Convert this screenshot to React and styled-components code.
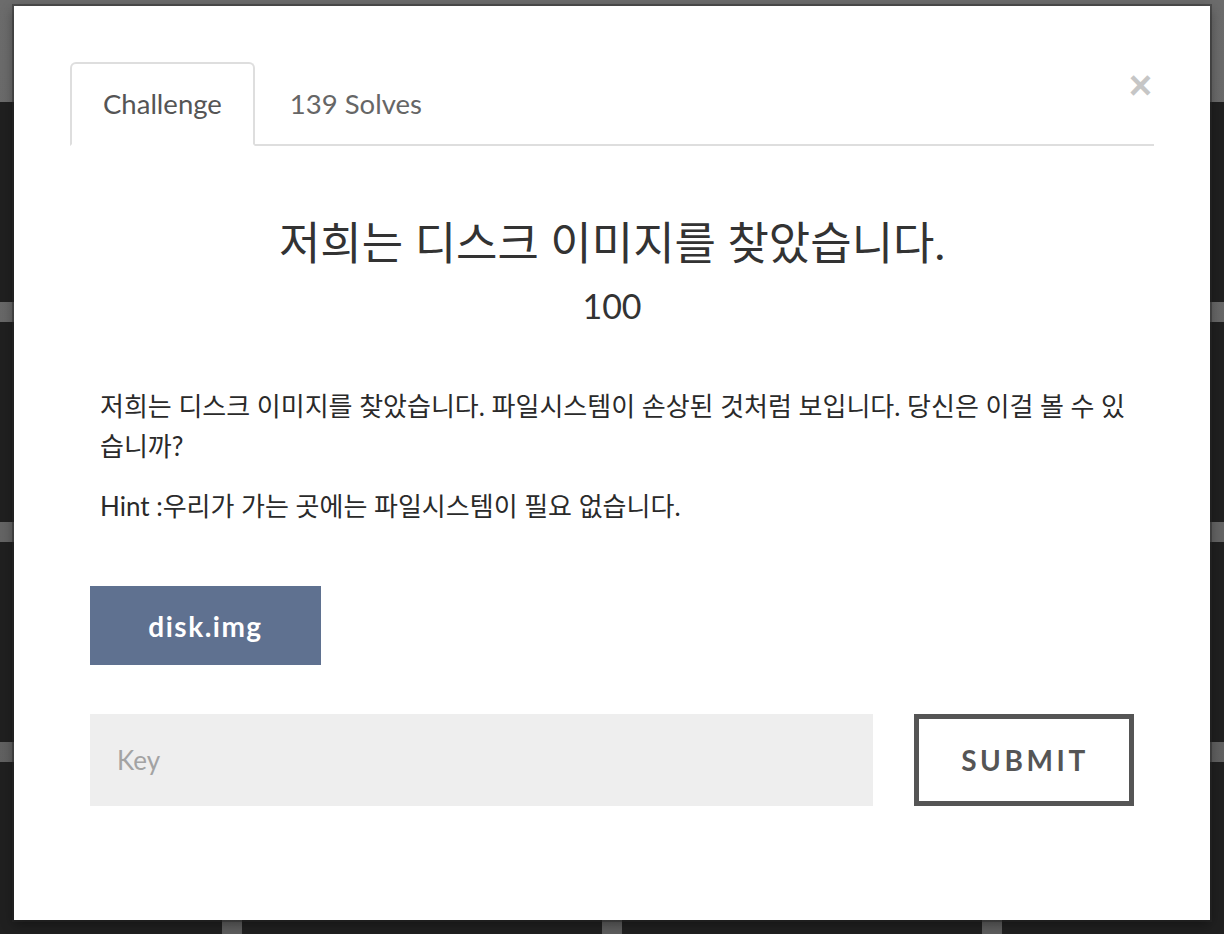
import styled, { createGlobalStyle } from "styled-components";

const GlobalStyle = createGlobalStyle`
  html, body {
    margin: 0;
    padding: 0;
    background: #656565;
    overflow: hidden;
  }
  * {
    box-sizing: border-box;
  }
`;

const Page = styled.div`
  position: relative;
  width: 1224px;
  height: 934px;
  overflow: hidden;
  background: linear-gradient(#6c6c6c, #5e5e5e);
  font-family: Lato, "Noto Sans CJK KR", sans-serif;
`;

const CardGrid = styled.div`
  display: grid;
  grid-template-columns: repeat(4, 360px);
  grid-auto-rows: 200px;
  gap: 20px;
  margin-left: -138px;
  padding-top: 102px;
`;

const Card = styled.div`
  background: #202020;
  display: flex;
  flex-direction: column;
  align-items: center;
  justify-content: center;
  color: #5a5a5a;
  font-size: 22px;
  line-height: 30px;
`;

const Modal = styled.div`
  position: absolute;
  left: 14px;
  top: 6px;
  width: 1196px;
  height: 914px;
  background: #fff;
  box-shadow: 0 0 0 2px rgba(40, 40, 40, 0.45), 0 4px 12px rgba(0, 0, 0, 0.4);
  padding: 56px 56px 0;
`;

const Close = styled.span`
  position: absolute;
  top: 57px;
  right: 58px;
  font-size: 40px;
  font-weight: 700;
  line-height: 44px;
  color: #c6c6c6;
  font-family: "Liberation Sans", sans-serif;
`;

const TabList = styled.div`
  display: flex;
  border-bottom: 2px solid #dedede;
`;

const Tab = styled.div`
  padding: 20px 31px;
  margin-right: 2px;
  margin-bottom: -2px;
  font-size: 27.5px;
  line-height: 40px;
  color: ${(p) => (p.$active ? "#555" : "#666")};
  border: 2px solid ${(p) => (p.$active ? "#dedede" : "transparent")};
  border-bottom-color: ${(p) => (p.$active ? "#fff" : "transparent")};
  border-radius: 6px 6px 0 0;
  background: ${(p) => (p.$active ? "#fff" : "transparent")};
`;

const Body = styled.div`
  padding: 72px 20px 0;
`;

const Title = styled.h2`
  margin: 0;
  text-align: center;
  font-size: 45px;
  font-weight: 400;
  line-height: 50px;
  color: #333;
`;

const Points = styled.h3`
  margin: 19px 0 0;
  text-align: center;
  font-size: 34px;
  font-weight: 400;
  line-height: 38px;
  color: #333;
`;

const Description = styled.div`
  margin-top: 61px;
  padding: 0 0 0 10px;
  font-size: 26px;
  line-height: 40px;
  color: #2a2a2a;

  p {
    margin: 0 0 20px;
  }
`;

const FileButton = styled.button`
  display: block;
  margin-top: 60px;
  width: 231px;
  height: 79px;
  border: none;
  background: #5f7190;
  color: #fff;
  font-family: Lato, sans-serif;
  font-size: 28px;
  font-weight: 700;
  letter-spacing: 1.5px;
`;

const SubmitRow = styled.div`
  display: flex;
  justify-content: space-between;
  margin-top: 49px;
`;

const KeyInput = styled.input`
  width: 783px;
  height: 92px;
  border: none;
  outline: none;
  background: #eeeeee;
  padding: 0 27px;
  font-family: Lato, sans-serif;
  font-size: 26px;
  color: #333;

  &::placeholder {
    color: #a3a3a3;
  }
`;

const SubmitButton = styled.button`
  width: 220px;
  height: 92px;
  border: 5px solid #555;
  background: #fff;
  color: #555;
  font-family: Lato, sans-serif;
  font-size: 28px;
  font-weight: 700;
  letter-spacing: 3.6px;
  padding-left: 8px;
`;

const cards = [
  ["0", "옹"], ["", ""], ["", ""], ["", "#"],
  ["천", "킹"], ["", ""], ["", ""], ["ne", ""],
  ["브", "디"], ["", ""], ["", ""], ["드", ""],
  ["은", "곡"], ["", ""], ["", ""], ["U", ""],
];

export default function App() {
  return (
    <Page>
      <GlobalStyle />
      <CardGrid>
        {cards.map(([a, b], i) => (
          <Card key={i}>
            <span>{a}</span>
            <span>{b}</span>
          </Card>
        ))}
      </CardGrid>
      <Modal>
        <Close>×</Close>
        <TabList>
          <Tab $active>Challenge</Tab>
          <Tab>139 Solves</Tab>
        </TabList>
        <Body>
          <Title>저희는 디스크 이미지를 찾았습니다.</Title>
          <Points>100</Points>
          <Description>
            <p>
              저희는 디스크 이미지를 찾았습니다. 파일시스템이 손상된 것처럼
              보입니다. 당신은 이걸 볼 수 있습니까?
            </p>
            <p>Hint :우리가 가는 곳에는 파일시스템이 필요 없습니다.</p>
          </Description>
          <FileButton>disk.img</FileButton>
          <SubmitRow>
            <KeyInput placeholder="Key" />
            <SubmitButton>SUBMIT</SubmitButton>
          </SubmitRow>
        </Body>
      </Modal>
    </Page>
  );
}
